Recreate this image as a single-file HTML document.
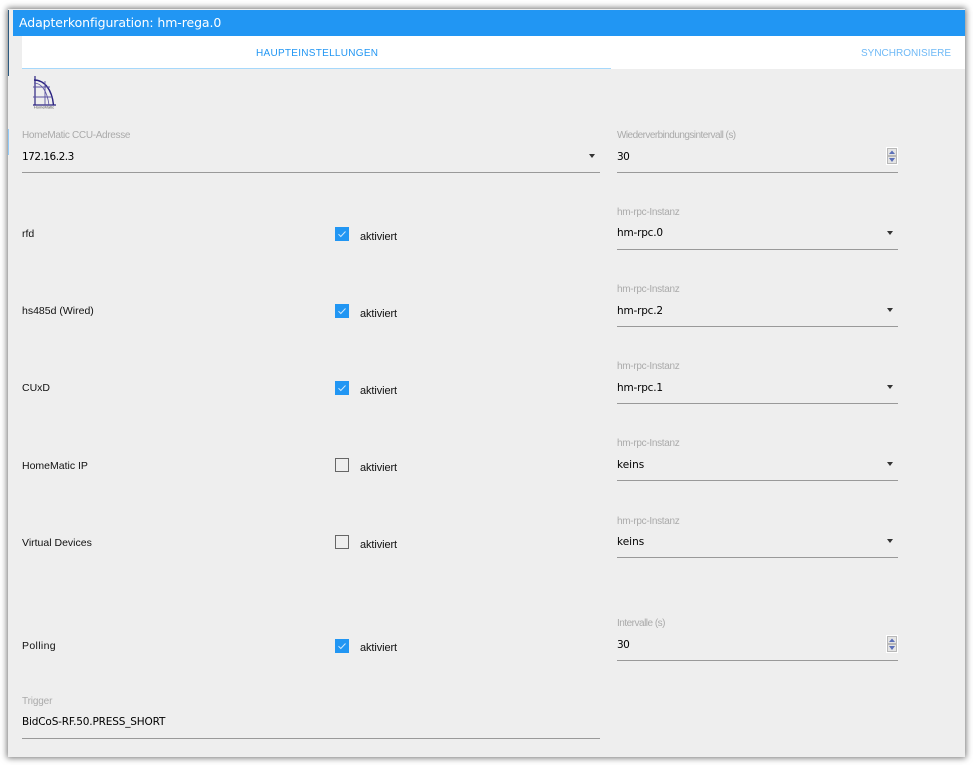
<!DOCTYPE html>
<html><head><meta charset="utf-8"><style>
html,body{margin:0;padding:0;width:973px;height:765px;overflow:hidden;background:#fff;}
*{box-sizing:border-box;}
.a{position:absolute;white-space:nowrap;}
#win{position:absolute;left:8px;top:9px;width:957px;height:748px;background:#eee;box-shadow:0 0 6px 1px rgba(0,0,0,.55);}
.lbl{font:10px/12px "Liberation Sans",sans-serif;color:#aaa;margin-top:1px;}
.h{letter-spacing:-.3px;margin-top:2px;}
.val{font:10.5px/14px "DejaVu Sans",sans-serif;color:#000;margin-top:1px;}
.r{letter-spacing:-.2px;}
.n{letter-spacing:-.5px;}
.txt{font:10.5px/12px "Liberation Sans",sans-serif;color:#111;margin-top:1px;}
.akt{font:11px/13px "Liberation Sans",sans-serif;color:#111;margin-top:1px;letter-spacing:-.1px;}
.line{position:absolute;height:1px;background:#999;}
.cb{position:absolute;width:14px;height:14px;left:335px;}
.arrow{position:absolute;width:0;height:0;margin-left:.5px;border-left:3.5px solid transparent;border-right:3.5px solid transparent;border-top:4px solid #333;}
</style></head><body>
<div id="win"></div>
<div class="a" style="left:8px;top:10px;width:1px;height:66px;background:#2c5a80"></div>
<div class="a" style="left:8px;top:129px;width:1px;height:26px;background:#90caf9"></div>
<div class="a" style="left:13px;top:10px;width:952px;height:26px;background:#2196f3"></div>
<div class="a" style="left:19px;top:14px;font:12.5px/17px 'DejaVu Sans',sans-serif;letter-spacing:-.1px;color:#fff">Adapterkonfiguration: hm-rega.0</div>
<div class="a" style="left:22px;top:36px;width:943px;height:33px;background:#fff"></div>
<div class="a" style="left:22px;top:68px;width:589px;height:1px;background:#a6d8fb"></div>
<div class="a" style="left:256px;top:48px;font:10px/12px 'Liberation Sans',sans-serif;letter-spacing:.28px;color:#2196f3">HAUPTEINSTELLUNGEN</div>
<div class="a" style="left:861px;top:48px;font:10px/12px 'Liberation Sans',sans-serif;letter-spacing:0;color:#6fb9f6">SYNCHRONISIERE</div>

<svg class="a" style="left:30px;top:74px" width="28" height="36" viewBox="0 0 28 36" fill="none">
<path d="M5 2V31M3 31H26" stroke="#2a2280" stroke-width="1.2"/>
<path d="M4 6C14 6 22 15 23.5 31" stroke="#2a2280" stroke-width="1.4"/>
<path d="M4 9C11 9 17 16 19 31" stroke="#5a52a0" stroke-width=".8"/>
<path d="M3 13H20M3 23H23M15 7V31" stroke="#5a52a0" stroke-width=".9"/>
<text x="14" y="34.5" font-size="4" font-family="Liberation Sans" fill="#555" text-anchor="middle">HomeMatic</text>
</svg>

<div class="a lbl" style="left:22px;top:129px;letter-spacing:-.33px">HomeMatic CCU-Adresse</div>
<div class="a val n" style="left:22px;top:149px">172.16.2.3</div>
<div class="arrow" style="left:588px;top:154px"></div>
<div class="line" style="left:22px;top:172px;width:578px"></div>

<div class="a lbl" style="left:617px;top:129px;letter-spacing:-.55px">Wiederverbindungsintervall (s)</div>
<div class="a val n" style="left:617px;top:149px">30</div>
<div class="line" style="left:617px;top:172px;width:281px"></div>
<svg class="a" style="left:886px;top:147px" width="12" height="18" viewBox="0 0 12 18"><rect width="12" height="18" fill="#fff"/><rect x="1.5" y="1.5" width="9" height="7" fill="#e4e4e4" stroke="#aaa" stroke-width=".8"/><rect x="1.5" y="9.5" width="9" height="7" fill="#e4e4e4" stroke="#aaa" stroke-width=".8"/><path d="M6 3.5L9 7H3Z" fill="#5b6fb8"/><path d="M6 15L9 11H3Z" fill="#5b6fb8"/></svg>

<div class="a txt" style="left:22px;top:227px">rfd</div>
<svg class="cb" style="top:227px" viewBox="0 0 14 14"><rect width="14" height="14" fill="#2196f3"/><path d="M3.5 7.2L5.8 9.5 10.5 4.5" fill="none" stroke="#cfe8fc" stroke-width="1"/></svg>
<div class="a akt" style="left:360px;top:230px">aktiviert</div>
<div class="a lbl h" style="left:617px;top:205px">hm-rpc-Instanz</div>
<div class="a val r" style="left:617px;top:225px">hm-rpc.0</div>
<div class="arrow" style="left:886px;top:231px"></div>
<div class="line" style="left:617px;top:249px;width:281px"></div>

<div class="a txt" style="left:22px;top:304px">hs485d (Wired)</div>
<svg class="cb" style="top:304px" viewBox="0 0 14 14"><rect width="14" height="14" fill="#2196f3"/><path d="M3.5 7.2L5.8 9.5 10.5 4.5" fill="none" stroke="#cfe8fc" stroke-width="1"/></svg>
<div class="a akt" style="left:360px;top:307px">aktiviert</div>
<div class="a lbl h" style="left:617px;top:282px">hm-rpc-Instanz</div>
<div class="a val r" style="left:617px;top:303px">hm-rpc.2</div>
<div class="arrow" style="left:886px;top:308px"></div>
<div class="line" style="left:617px;top:326px;width:281px"></div>

<div class="a txt" style="left:22px;top:381px">CUxD</div>
<svg class="cb" style="top:381px" viewBox="0 0 14 14"><rect width="14" height="14" fill="#2196f3"/><path d="M3.5 7.2L5.8 9.5 10.5 4.5" fill="none" stroke="#cfe8fc" stroke-width="1"/></svg>
<div class="a akt" style="left:360px;top:384px">aktiviert</div>
<div class="a lbl h" style="left:617px;top:359px">hm-rpc-Instanz</div>
<div class="a val r" style="left:617px;top:380px">hm-rpc.1</div>
<div class="arrow" style="left:886px;top:385px"></div>
<div class="line" style="left:617px;top:403px;width:281px"></div>

<div class="a txt" style="left:22px;top:459px">HomeMatic IP</div>
<div class="cb" style="top:458px;border:1.5px solid #666"></div>
<div class="a akt" style="left:360px;top:461px">aktiviert</div>
<div class="a lbl h" style="left:617px;top:436px">hm-rpc-Instanz</div>
<div class="a val" style="left:617px;top:457px">keins</div>
<div class="arrow" style="left:886px;top:462px"></div>
<div class="line" style="left:617px;top:480px;width:281px"></div>

<div class="a txt" style="left:22px;top:536px">Virtual Devices</div>
<div class="cb" style="top:535px;border:1.5px solid #666"></div>
<div class="a akt" style="left:360px;top:538px">aktiviert</div>
<div class="a lbl h" style="left:617px;top:514px">hm-rpc-Instanz</div>
<div class="a val" style="left:617px;top:534px">keins</div>
<div class="arrow" style="left:886px;top:539px"></div>
<div class="line" style="left:617px;top:557px;width:281px"></div>

<div class="a txt" style="left:22px;top:639px;letter-spacing:.35px">Polling</div>
<svg class="cb" style="top:639px" viewBox="0 0 14 14"><rect width="14" height="14" fill="#2196f3"/><path d="M3.5 7.2L5.8 9.5 10.5 4.5" fill="none" stroke="#cfe8fc" stroke-width="1"/></svg>
<div class="a akt" style="left:360px;top:641px">aktiviert</div>
<div class="a lbl" style="left:617px;top:617px;letter-spacing:-.5px">Intervalle (s)</div>
<div class="a val n" style="left:617px;top:637px">30</div>
<div class="line" style="left:617px;top:660px;width:281px"></div>
<svg class="a" style="left:886px;top:635px" width="12" height="18" viewBox="0 0 12 18"><rect width="12" height="18" fill="#fff"/><rect x="1.5" y="1.5" width="9" height="7" fill="#e4e4e4" stroke="#aaa" stroke-width=".8"/><rect x="1.5" y="9.5" width="9" height="7" fill="#e4e4e4" stroke="#aaa" stroke-width=".8"/><path d="M6 3.5L9 7H3Z" fill="#5b6fb8"/><path d="M6 15L9 11H3Z" fill="#5b6fb8"/></svg>

<div class="a lbl" style="left:22px;top:695px;letter-spacing:-.15px">Trigger</div>
<div class="a val" style="left:22px;top:714px;letter-spacing:-.17px">BidCoS-RF.50.PRESS_SHORT</div>
<div class="line" style="left:22px;top:738px;width:578px"></div>
</body></html>
